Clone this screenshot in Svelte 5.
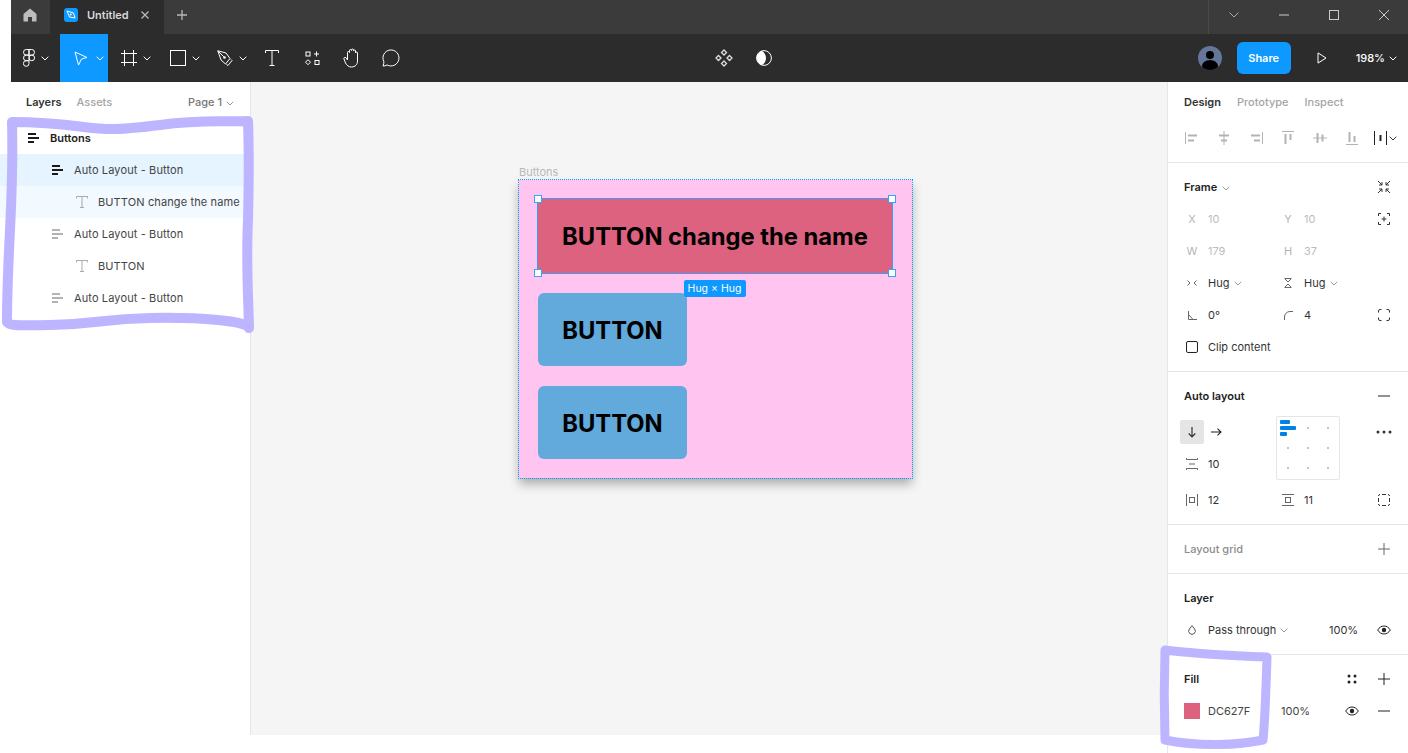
<script lang="ts">
    const layers = [
        { name: "Buttons", depth: 0, kind: "al", strong: true },
        { name: "Auto Layout - Button", depth: 1, kind: "al", strong: true, tint: "sel" },
        { name: "BUTTON change the name", depth: 2, kind: "text", tint: "child" },
        { name: "Auto Layout - Button", depth: 1, kind: "al" },
        { name: "BUTTON", depth: 2, kind: "text" },
        { name: "Auto Layout - Button", depth: 1, kind: "al" },
    ];
    const dots = [1, 2, 3, 4, 5, 6, 7, 8];
</script>

{#snippet chev(c = "#fff")}
    <svg class="chev" width="8" height="5" viewBox="0 0 8 5"><path d="M.7.7 4 4 7.3.7" fill="none" stroke={c} /></svg>
{/snippet}

{#snippet eye()}
    <svg width="14" height="10" viewBox="0 0 14 10"><path d="M.7 5C2.3 2.3 4.4 1 7 1s4.7 1.3 6.3 4C11.700 7.700 9.600 9 7 9S2.300 7.700.7 5Z" fill="none" stroke="#222" /><circle cx="7" cy="5" r="2.200" fill="#222" /></svg>
{/snippet}

{#snippet alIcon(c)}
    <svg width="12" height="10" viewBox="0 0 12 10"><path d="M0 1h8M0 5h11M0 9h6" stroke={c} stroke-width="2" /></svg>
{/snippet}

<div class="app">
    <header class="titlebar">
        <div class="home">
            <svg width="14" height="14" viewBox="0 0 14 14"><path d="M7 .5 13.500 6v7.500H9V9H5v4.500H.5V6Z" fill="#bdbdbd" /></svg>
        </div>
        <div class="tab">
            <span class="file-icon">
                <svg width="10" height="10" viewBox="0 0 10 10"><path d="M1 1 7.500 3 9 8 3.500 7Z" fill="none" stroke="#fff" /><circle cx="4.700" cy="4.500" r="1" fill="#fff" /></svg>
            </span>
            <span class="tab-name">Untitled</span>
            <svg class="tab-x" width="8" height="8" viewBox="0 0 8 8"><path d="m.5.5 7 7m0-7-7 7" stroke="#b8b8b8" stroke-width="1.300" /></svg>
        </div>
        <div class="tab-plus">
            <svg width="10" height="10" viewBox="0 0 10 10"><path d="M5 0v10M0 5h10" stroke="#b8b8b8" stroke-width="1.300" /></svg>
        </div>
        <div class="win">
            <button aria-label="Menu"><svg width="10" height="6" viewBox="0 0 10 6"><path d="m.5.5 4.500 4.500L9.500.5" fill="none" stroke="#aaa" /></svg></button>
            <button aria-label="Minimize"><svg width="10" height="2" viewBox="0 0 10 2"><path d="M0 1h10" stroke="#ccc" /></svg></button>
            <button aria-label="Maximize"><svg width="10" height="10" viewBox="0 0 10 10"><rect x=".5" y=".5" width="9" height="9" fill="none" stroke="#ccc" /></svg></button>
            <button aria-label="Close"><svg width="10" height="10" viewBox="0 0 10 10"><path d="m0 0 10 10M10 0 0 10" stroke="#ccc" /></svg></button>
        </div>
    </header>

    <nav class="toolbar">
        <div class="tools">
            <div class="tool t-logo">
                <svg width="12" height="18" viewBox="0 0 12 18" fill="none" stroke="#fff"><path d="M6 .5H3.300a2.700 2.700 0 0 0 0 5.600H6Zm0 0h2.700a2.700 2.700 0 0 1 0 5.600H6Zm0 5.600H3.300a2.700 2.700 0 0 0 0 5.600H6Zm0 2.800a2.800 2.800 0 1 0 5.600 0 2.800 2.800 0 0 0-5.600 0Zm0 2.800H3.300A2.800 2.800 0 1 0 6 14.500Z" /></svg>
                {@render chev()}
            </div>
            <div class="tool t-move">
                <svg width="14" height="15" viewBox="0 0 14 15"><path d="M1 1 13 6.500 7.500 8 4.500 14Z" fill="none" stroke="#fff" /></svg>
                {@render chev()}
            </div>
            <div class="tool t-frame">
                <svg width="16" height="16" viewBox="0 0 16 16"><path d="M3.500 0v16M12.500 0v16M0 3.500h16M0 12.500h16" stroke="#fff" /></svg>
                {@render chev()}
            </div>
            <div class="tool t-rect">
                <svg width="16" height="16" viewBox="0 0 16 16"><rect x=".5" y=".5" width="15" height="15" fill="none" stroke="#fff" /></svg>
                {@render chev()}
            </div>
            <div class="tool t-pen">
                <svg width="16" height="16" viewBox="0 0 16 16"><path d="M.8.8 9 3l4 5.500-4.500 5.500-4.500-4Z" fill="none" stroke="#fff" /><path d="m.8.8 6 6" stroke="#fff" /><circle cx="7.500" cy="7.500" r="1.300" fill="#fff" /><path d="m9.500 14.500 1.500 1 4-5-1-1" fill="none" stroke="#fff" /></svg>
                {@render chev()}
            </div>
            <div class="tool t-text">
                <svg width="14" height="16" viewBox="0 0 14 16"><path d="M.5 3V.5h13V3M7 .5v15M4.500 15.500h5" fill="none" stroke="#fff" /></svg>
            </div>
            <div class="tool t-comp">
                <svg width="15" height="15" viewBox="0 0 15 15" fill="none" stroke="#fff"><rect x="1" y="1" width="4" height="4" /><path d="M11.500 .5v5M9 3h5" /><path d="m3 8.700 2.500 2.500L3 13.700.5 11.200Z" /><rect x="10" y="9.500" width="4" height="4" /></svg>
            </div>
            <div class="tool t-hand">
                <svg width="18" height="20" viewBox="0 0 18 20"><path d="M4.500 12V4.500a1 1 0 0 1 2 0V2.500a1 1 0 0 1 2 0v-.5a1 1 0 0 1 2 0v1a1 1 0 0 1 2 0V5a1 1 0 0 1 2 0v8c0 3.500-2.300 6-6 6-3 0-4.500-1.500-6-4L1 11c-.7-1.300 1-2.300 2-1.200Z" fill="none" stroke="#fff" /></svg>
            </div>
            <div class="tool t-comment">
                <svg width="18" height="18" viewBox="0 0 18 18"><path d="M1 17c.7-1.600 1-3 .8-4.500A8 8 0 1 1 5 15.900c-1.300.9-2.600 1.100-4 1.100Z" fill="none" stroke="#fff" /></svg>
            </div>
        </div>
        <div class="center-tools">
            <svg width="18" height="18" viewBox="0 0 18 18" fill="none" stroke="#ddd" stroke-width="1.300"><path d="m9 1 2.500 2.500L9 6 6.500 3.500ZM3.500 6.500 6 9l-2.500 2.500L1 9ZM14.500 6.500 17 9l-2.500 2.500L12 9ZM9 12l2.500 2.500L9 17l-2.500-2.500Z" /></svg>
            <svg width="16" height="16" viewBox="0 0 16 16"><circle cx="8" cy="8" r="7.400" fill="none" stroke="#fff" /><path d="M8 .6a7.400 7.400 0 0 0-2 14.500C8 14 10 11.500 10 8S8 2 6 .9" fill="#fff" /></svg>
        </div>
        <div class="tool-right">
            <svg class="avatar" width="24" height="24" viewBox="0 0 24 24"><defs><clipPath id="av"><circle cx="12" cy="12" r="12" /></clipPath></defs><circle cx="12" cy="12" r="12" fill="#65769b" /><g clip-path="url(#av)"><circle cx="12" cy="9" r="4" fill="#000" /><ellipse cx="12" cy="20" rx="8" ry="6" fill="#000" /></g></svg>
            <button class="share">Share</button>
            <svg class="play" width="10" height="12" viewBox="0 0 10 12"><path d="M1 .9 9 6l-8 5.100Z" fill="none" stroke="#fff" /></svg>
            <span class="zoom-val">198%</span>
            {@render chev()}
        </div>
    </nav>

    <div class="main">
        <aside class="left">
            <div class="left-tabs">
                <span class="on">Layers</span>
                <span class="off">Assets</span>
                <span class="page">Page 1 {@render chev("#999")}</span>
            </div>
            <ul class="layers">
                {#each layers as l}
                    <li class="layer {l.tint ?? ''}" class:top={l.depth === 0} style="padding-left: {28 + l.depth * 24}px">
                        <span class="layer-icon">
                            {#if l.kind === "al"}
                                {@render alIcon(l.strong ? "#1a1a1a" : "#b3b3b3")}
                            {:else}
                                <svg width="12" height="12" viewBox="0 0 12 12"><path d="M.5 2.500V.5h11v2M6 .5v11M4 11.500h4" fill="none" stroke="#aaa" /></svg>
                            {/if}
                        </span>
                        <span>{l.name}</span>
                    </li>
                {/each}
            </ul>
        </aside>

        <section class="canvas">
            <div class="frame-label">Buttons</div>
            <div class="frame">
                <div class="btn wide">
                    BUTTON change the name
                    <i class="h tl"></i><i class="h tr"></i><i class="h bl"></i><i class="h br"></i>
                    <span class="hug">Hug × Hug</span>
                </div>
                <div class="btn">BUTTON</div>
                <div class="btn">BUTTON</div>
            </div>
        </section>

        <aside class="right">
            <div class="sec sec-tabs">
                <div class="right-tabs">
                    <span class="on">Design</span>
                    <span class="off">Prototype</span>
                    <span class="off">Inspect</span>
                </div>
                <div class="aligns">
                    <svg width="14" height="14" viewBox="0 0 14 14"><path d="M.5 1v12" stroke="#b3b3b3" /><path d="M3 3.500h9v2H3zM3 8.500h6v2H3z" fill="#b3b3b3" /></svg>
                    <svg width="14" height="14" viewBox="0 0 14 14"><path d="M7 0v14" stroke="#b3b3b3" /><path d="M2 3.500h10v2H2zM4 8.500h6v2H4z" fill="#b3b3b3" /></svg>
                    <svg width="14" height="14" viewBox="0 0 14 14"><path d="M13.500 1v12" stroke="#b3b3b3" /><path d="M2 3.500h9v2H2zM5 8.500h6v2H5z" fill="#b3b3b3" /></svg>
                    <svg width="14" height="14" viewBox="0 0 14 14"><path d="M1 .5h12" stroke="#b3b3b3" /><path d="M3.500 3h2v10h-2zM8.500 3h2v6h-2z" fill="#b3b3b3" /></svg>
                    <svg width="14" height="14" viewBox="0 0 14 14"><path d="M0 7h14" stroke="#b3b3b3" /><path d="M3.500 2h2v10h-2zM8.500 3.500h2v7h-2z" fill="#b3b3b3" /></svg>
                    <svg width="14" height="14" viewBox="0 0 14 14"><path d="M1 13.500h12" stroke="#b3b3b3" /><path d="M3.500 1h2v10h-2zM8.500 5h2v6h-2z" fill="#b3b3b3" /></svg>
                    <span class="dist">
                        <svg width="13" height="14" viewBox="0 0 13 14"><path d="M.5 0v14M12.500 0v14" stroke="#222" /><path d="M5.500 4h2v6h-2z" fill="#222" /></svg>
                        {@render chev("#333")}
                    </span>
                </div>
            </div>

            <div class="sec">
                <div class="row head">
                    <b>Frame <span class="head-chev">{@render chev("#999")}</span></b>
                    <span class="end">
                        <svg width="14" height="14" viewBox="0 0 14 14" fill="none" stroke="#333"><path d="m1 1 4 4M5 2v3H2M13 1 9 5M9 2v3h3M1 13l4-4M2 9h3v3M13 13 9 9M12 9H9v3" /></svg>
                    </span>
                </div>
                <div class="row">
                    <span class="cell dim"><i>X</i>10</span>
                    <span class="cell dim"><i>Y</i>10</span>
                    <span class="end">
                        <svg width="12" height="12" viewBox="0 0 12 12" fill="none" stroke="#333"><path d="M.5 3V.5H3M9 .5h2.500V3M11.500 9v2.500H9M3 11.500H.5V9M6 3.500v5M3.500 6h5" /></svg>
                    </span>
                </div>
                <div class="row">
                    <span class="cell dim"><i>W</i>179</span>
                    <span class="cell dim"><i>H</i>37</span>
                </div>
                <div class="row">
                    <span class="cell"><i><svg width="10" height="6" viewBox="0 0 10 6" fill="none" stroke="#666"><path d="m.5.5 2.500 2.500L.5 5.500M9.500.5 7 3l2.500 2.500" /></svg></i>Hug {@render chev("#999")}</span>
                    <span class="cell"><i><svg width="8" height="10" viewBox="0 0 8 10" fill="none" stroke="#666"><path d="M.5.5h7M1 1l3 3 3-3M.5 9.500h7M1 9l3-3 3 3" /></svg></i>Hug {@render chev("#999")}</span>
                </div>
                <div class="row">
                    <span class="cell"><i><svg width="9" height="9" viewBox="0 0 9 9" fill="none" stroke="#666"><path d="M.5 0v8.500H9M.5 3.500 5 8.500" /></svg></i>0°</span>
                    <span class="cell"><i><svg width="9" height="9" viewBox="0 0 9 9" fill="none" stroke="#666"><path d="M.5 9V6A5.500 5.500 0 0 1 6 .5h3" /></svg></i>4</span>
                    <span class="end">
                        <svg width="12" height="12" viewBox="0 0 12 12" fill="none" stroke="#333"><path d="M.5 3.500V2A1.500 1.500 0 0 1 2 .5h1.500M8.500.5H10A1.500 1.500 0 0 1 11.500 2v1.500M11.500 8.500V10a1.500 1.500 0 0 1-1.500 1.500H8.500M3.500 11.500H2A1.500 1.500 0 0 1 .5 10V8.500" /></svg>
                    </span>
                </div>
                <div class="row">
                    <span class="cell clip"><i><span class="check"></span></i>Clip content</span>
                </div>
            </div>

            <div class="sec">
                <div class="row head">
                    <b>Auto layout</b>
                    <span class="end"><svg width="12" height="2" viewBox="0 0 12 2"><path d="M0 1h12" stroke="#222" /></svg></span>
                </div>
                <div class="al-body">
                    <div class="al-left">
                        <div class="dirs">
                            <span class="dir active"><svg width="8" height="11" viewBox="0 0 8 11" fill="none" stroke="#333" stroke-width="1.200"><path d="M4 0v10M.7 6.500 4 10l3.300-3.500" /></svg></span>
                            <span class="dir"><svg width="11" height="8" viewBox="0 0 11 8" fill="none" stroke="#222" stroke-width="1.100"><path d="M0 4h10M6.500.7 10 4 6.500 7.300" /></svg></span>
                        </div>
                        <span class="cell al-gap"><i><svg width="12" height="12" viewBox="0 0 12 12" fill="none" stroke="#666"><path d="M.5 0v1.500h11V0M.5 12v-1.500h11V12M3 6h6" /></svg></i>10</span>
                    </div>
                    <div class="al-pick">
                        <div class="bars"><span class="b1"></span><span class="b2"></span><span class="b3"></span></div>
                        {#each dots as d}
                            <span class="dot d{d}"></span>
                        {/each}
                    </div>
                    <div class="al-more">
                        <svg width="16" height="4" viewBox="0 0 16 4"><circle cx="2" cy="2" r="1.500" fill="#333" /><circle cx="8" cy="2" r="1.500" fill="#333" /><circle cx="14" cy="2" r="1.500" fill="#333" /></svg>
                    </div>
                </div>
                <div class="row pads">
                    <span class="cell"><i><svg width="12" height="12" viewBox="0 0 12 12" fill="none" stroke="#666"><path d="M.5 0v12M11.500 0v12" /><rect x="3.500" y="3.500" width="5" height="5" /></svg></i>12</span>
                    <span class="cell"><i><svg width="12" height="12" viewBox="0 0 12 12" fill="none" stroke="#666"><path d="M0 .5h12M0 11.500h12" /><rect x="3.500" y="3.500" width="5" height="5" /></svg></i>11</span>
                    <span class="end"><svg width="12" height="12" viewBox="0 0 12 12" fill="none" stroke="#333"><path d="M.5 4v4M11.500 4v4M4 .5h4M4 11.500h4M.5 2A1.500 1.500 0 0 1 2 .5M10 .5A1.500 1.500 0 0 1 11.500 2M11.500 10A1.500 1.500 0 0 1 10 11.500M2 11.500A1.500 1.500 0 0 1 .5 10" /></svg></span>
                </div>
            </div>

            <div class="sec">
                <div class="row head">
                    <b class="muted">Layout grid</b>
                    <span class="end"><svg width="12" height="12" viewBox="0 0 12 12"><path d="M6 0v12M0 6h12" stroke="#666" /></svg></span>
                </div>
            </div>

            <div class="sec">
                <div class="row head"><b>Layer</b></div>
                <div class="row">
                    <span class="cell blend"><i><svg width="8" height="10" viewBox="0 0 8 10"><path d="M4 .7 6.600 4a3.300 3.300 0 1 1-5.200 0Z" fill="none" stroke="#555" /></svg></i>Pass through {@render chev("#999")}</span>
                    <span class="pct">100%</span>
                    <span class="end">{@render eye()}</span>
                </div>
            </div>

            <div class="sec last">
                <div class="row head">
                    <b>Fill</b>
                    <span class="end two">
                        <svg width="10" height="10" viewBox="0 0 10 10"><circle cx="2" cy="2" r="1.500" fill="#222" /><circle cx="8" cy="2" r="1.500" fill="#222" /><circle cx="2" cy="8" r="1.500" fill="#222" /><circle cx="8" cy="8" r="1.500" fill="#222" /></svg>
                        <svg width="12" height="12" viewBox="0 0 12 12"><path d="M6 0v12M0 6h12" stroke="#222" /></svg>
                    </span>
                </div>
                <div class="row fill">
                    <span class="swatch"></span>
                    <span class="hex">DC627F</span>
                    <span class="fill-pct">100%</span>
                    <span class="end two">
                        {@render eye()}
                        <svg width="12" height="2" viewBox="0 0 12 2"><path d="M0 1h12" stroke="#222" /></svg>
                    </span>
                </div>
            </div>
        </aside>
    </div>

    <!-- hand drawn marks on top of the screenshot -->
    <svg class="marks" width="1408" height="753" viewBox="0 0 1408 753" fill="none" stroke="#bdb5ff" stroke-linejoin="round" stroke-linecap="round">
        <path stroke-width="10" d="M12 122C40 122 60 124 84 127S120 130 160 125 210 122 248 121C249 150 249 180 248 220 246 260 248 290 249 328 248 321 200 317 150 318S100 324 50 325 12 324 7 322C7 290 8 270 10 230S13 160 12 122Z" />
        <path stroke-width="9" d="M1165 650C1190 653 1210 655 1267 657 1266 690 1265 720 1263 740 1240 745 1200 747 1165 740 1164 710 1164 680 1165 650Z" />
    </svg>
</div>

<style>
    :global(body) {
        margin: 0;
        background: #fff;
        font-family: Inter, "Noto Sans", sans-serif;
        font-size: 11px;
        color: #333;
    }

    .app {
        position: relative;
        height: 753px;
        overflow: hidden;
    }

    .marks {
        position: absolute;
        top: 0;
        left: 0;
        pointer-events: none;
    }

    .chev {
        flex: none;
    }

    .titlebar {
        display: flex;
        height: 34px;
        margin-left: 11px;
        background: #3b3b3b;
    }

    .home {
        width: 39px;
        box-sizing: border-box;
        padding: 0 1px 4px 0;
        display: flex;
        align-items: center;
        justify-content: center;
    }

    .tab {
        width: 114px;
        background: #2c2c2c;
        display: flex;
        align-items: center;
        padding: 0 0 4px 14px;
        box-sizing: border-box;
    }

    .file-icon {
        width: 14px;
        height: 14px;
        background: #0d99ff;
        border-radius: 3px;
        display: flex;
        align-items: center;
        justify-content: center;
    }

    .tab-name {
        margin-left: 9px;
        color: #d8d8d8;
        font-weight: 600;
    }

    .tab-x {
        margin-left: 12px;
    }

    .tab-plus {
        margin-left: 13px;
        padding-bottom: 4px;
        display: flex;
        align-items: center;
    }

    .win {
        margin-left: auto;
        width: 199px;
        display: flex;
        border-left: 1px solid #4a4a4a;
    }

    .win button {
        width: 50px;
        flex: none;
        background: none;
        border: none;
        padding: 0 0 4px;
        display: flex;
        align-items: center;
        justify-content: center;
    }

    .toolbar {
        display: grid;
        grid-template-columns: 1fr auto 1fr;
        align-items: center;
        height: 48px;
        margin-left: 11px;
        background: #2c2c2c;
        color: #fff;
    }

    .tools {
        display: flex;
        height: 48px;
    }

    .tool {
        display: flex;
        align-items: center;
        justify-content: center;
        gap: 6px;
        height: 48px;
        box-sizing: border-box;
    }

    .t-logo { width: 49px; }
    .t-move { width: 48px; padding-left: 10px; gap: 8px; background: #0d99ff; }
    .t-frame { width: 48px; padding-left: 8px; }
    .t-rect { width: 48px; padding-left: 10px; }
    .t-pen { width: 48px; padding-left: 8px; }
    .t-text { width: 40px; }
    .t-comp { width: 40px; }
    .t-hand { width: 40px; }
    .t-comment { width: 38px; }

    .center-tools {
        display: flex;
        align-items: center;
        gap: 23px;
        margin-left: 67px;
    }

    .tool-right {
        display: flex;
        align-items: center;
        justify-content: flex-end;
        padding-right: 11px;
    }

    .share {
        margin-left: 15px;
        width: 54px;
        height: 32px;
        border: none;
        border-radius: 6px;
        background: #0d99ff;
        color: #fff;
        font: 600 11px Inter, sans-serif;
    }

    .play {
        margin-left: 26px;
    }

    .zoom-val {
        margin-left: 29px;
        margin-right: 4px;
        font-weight: 500;
    }

    .main {
        display: flex;
        height: 671px;
    }

    .left {
        width: 251px;
        flex: none;
        box-sizing: border-box;
        height: 653px;
        border-right: 1px solid #e5e5e5;
    }

    .left-tabs {
        display: flex;
        align-items: center;
        height: 40px;
        padding-left: 26px;
    }

    .on {
        color: #333;
        font-weight: 600;
    }

    .off {
        color: #a5a5a5;
        font-weight: 500;
    }

    .left-tabs .off {
        margin-left: 15px;
    }

    .page {
        margin-left: auto;
        margin-right: 16px;
        color: #777;
        font-weight: 500;
    }

    .page .chev {
        margin-left: 1px;
    }

    .layers {
        list-style: none;
        margin: 0;
        padding: 0;
    }

    .layer {
        display: flex;
        align-items: center;
        height: 32px;
        white-space: nowrap;
        color: #444;
        letter-spacing: 0.12px;
    }

    .layer.top {
        font-weight: 600;
        color: #222;
        letter-spacing: 0;
    }

    .layer.sel { background: #e5f4ff; }
    .layer.child { background: #f2f9ff; }

    .layer-icon {
        width: 22px;
        flex: none;
        display: flex;
    }

    .canvas {
        position: relative;
        flex: 1;
        height: 653px;
        background: #f5f5f5;
    }

    .frame-label {
        position: absolute;
        left: 268px;
        top: 83px;
        color: #b8b8b8;
    }

    .frame {
        position: absolute;
        left: 268px;
        top: 98px;
        width: 393px;
        height: 298px;
        box-sizing: border-box;
        padding: 19px;
        display: flex;
        flex-direction: column;
        align-items: flex-start;
        gap: 20px;
        background: #ffc4ef;
        box-shadow: 0 6px 10px rgba(0, 0, 0, 0.3);
    }

    /* dotted selection edge of the frame */
    .frame::after {
        content: "";
        position: absolute;
        inset: -1px;
        pointer-events: none;
        background:
            repeating-linear-gradient(90deg, #0d99ff 0 1px, transparent 1px 2px) top / 100% 1px no-repeat,
            repeating-linear-gradient(90deg, #0d99ff 0 1px, transparent 1px 2px) bottom / 100% 1px no-repeat,
            repeating-linear-gradient(0deg, #0d99ff 0 1px, transparent 1px 2px) left / 1px 100% no-repeat,
            repeating-linear-gradient(0deg, #0d99ff 0 1px, transparent 1px 2px) right / 1px 100% no-repeat;
    }

    .btn {
        position: relative;
        width: 149px;
        height: 73px;
        box-sizing: border-box;
        display: flex;
        align-items: center;
        justify-content: center;
        padding-top: 1px;
        border-radius: 6px;
        background: #62a9dc;
        color: #000;
        font-size: 23.760px;
        font-weight: 700;
    }

    .btn.wide {
        width: 354px;
        height: 74px;
        background: #dc627f;
        border-radius: 2px;
        outline: 1px solid #3d9bf5;
        white-space: nowrap;
    }

    .h {
        position: absolute;
        z-index: 1;
        width: 6px;
        height: 6px;
        background: #fff;
        border: 1.500px solid #31a5ff;
    }

    .tl { left: -4px; top: -4px; }
    .tr { right: -4px; top: -4px; }
    .bl { left: -4px; bottom: -4px; }
    .br { right: -4px; bottom: -4px; }

    .hug {
        position: absolute;
        left: 145.500px;
        top: 81px;
        width: 62px;
        height: 17px;
        z-index: 2;
        border-radius: 2px;
        background: #0d99ff;
        color: #fff;
        font-size: 10.500px;
        font-weight: 400;
        line-height: 18px;
        text-align: center;
    }

    .right {
        width: 241px;
        flex: none;
        box-sizing: border-box;
        border-left: 1px solid #e5e5e5;
    }

    .sec {
        padding: 8px 0;
        border-bottom: 1px solid #e5e5e5;
    }

    .sec.last {
        border-bottom: none;
    }

    .sec-tabs {
        padding: 0;
        height: 81px;
        box-sizing: border-box;
    }

    .right-tabs {
        display: flex;
        align-items: center;
        gap: 16px;
        height: 40px;
        padding-left: 16px;
    }

    .aligns {
        display: flex;
        align-items: center;
        height: 32px;
        padding-left: 8px;
    }

    .aligns > svg {
        width: 32px;
    }

    .dist {
        display: flex;
        align-items: center;
        gap: 2px;
        margin-left: 6px;
    }

    .row {
        display: grid;
        grid-template-columns: 96px 96px 24px;
        align-items: center;
        height: 32px;
        padding-left: 12px;
        white-space: nowrap;
    }

    .head b {
        padding-left: 4px;
        font-weight: 600;
        color: #222;
    }

    .head b.muted {
        color: #8c8c8c;
        font-weight: 500;
    }

    .head .end {
        grid-column: 3;
    }

    .head-chev {
        margin-left: 2px;
    }

    .end {
        grid-column: 3;
        display: flex;
        align-items: center;
        justify-content: center;
    }

    .cell {
        display: flex;
        align-items: center;
        color: #333;
    }

    .cell .chev {
        margin-left: 5px;
    }

    .cell i {
        flex: none;
        width: 24px;
        margin-right: 4px;
        display: flex;
        justify-content: center;
        font-style: normal;
    }

    .cell.dim { color: #bcbcbc; }
    .cell.dim i { color: #b5b5b5; }

    .check {
        width: 10px;
        height: 10px;
        border: 1px solid #222;
        border-radius: 2px;
    }

    .al-body {
        display: grid;
        grid-template-columns: 96px 64px 1fr;
        height: 64px;
        padding-left: 12px;
        margin: 4px 0;
    }

    .dirs {
        display: flex;
        height: 32px;
        align-items: center;
    }

    .dir {
        width: 24px;
        height: 24px;
        display: flex;
        align-items: center;
        justify-content: center;
        border-radius: 2px;
    }

    .dir.active {
        background: #e5e5e5;
    }

    .al-gap {
        height: 32px;
    }

    .al-pick {
        box-sizing: border-box;
        width: 64px;
        height: 64px;
        border: 1px solid #e5e5e5;
        border-radius: 2px;
        display: grid;
        grid-template-columns: repeat(3, 20px);
        grid-template-rows: repeat(3, 20px);
        padding: 1px 0 0 1px;
    }

    .bars {
        grid-column: 1;
        grid-row: 1;
        display: flex;
        flex-direction: column;
        gap: 2px;
        padding: 2px 0 0 2px;
    }

    .bars span {
        height: 4px;
        border-radius: 1px;
        background: #0081e6;
    }

    .b1 { width: 10px; }
    .b2 { width: 16px; }
    .b3 { width: 7px; }

    .dot {
        align-self: center;
        justify-self: center;
        width: 2px;
        height: 2px;
        background: #c4c4c4;
    }

    .al-more {
        display: flex;
        align-items: flex-start;
        justify-content: flex-end;
        padding: 14px 16px 0 0;
        width: 68px;
        box-sizing: border-box;
    }

    .pct {
        grid-column: 2;
        padding-left: 53px;
    }

    .blend {
        min-width: 0;
        overflow: visible;
    }

    .blend .chev {
        margin-left: 4px;
    }

    .fill {
        grid-template-columns: 16px 58px 66px 1fr;
        padding-left: 16px;
        padding-right: 18px;
        width: 240px;
        box-sizing: border-box;
    }

    .swatch {
        width: 16px;
        height: 16px;
        background: #dc627f;
    }

    .hex {
        padding-left: 8px;
        color: #444;
    }

    .fill-pct {
        padding-left: 23px;
        color: #444;
    }

    .fill .end.two {
        grid-column: 4;
        justify-content: flex-end;
        gap: 19px;
    }

    .head .end.two {
        justify-content: flex-end;
        margin-left: -40px;
        padding-right: 6px;
        gap: 21px;
    }
</style>
